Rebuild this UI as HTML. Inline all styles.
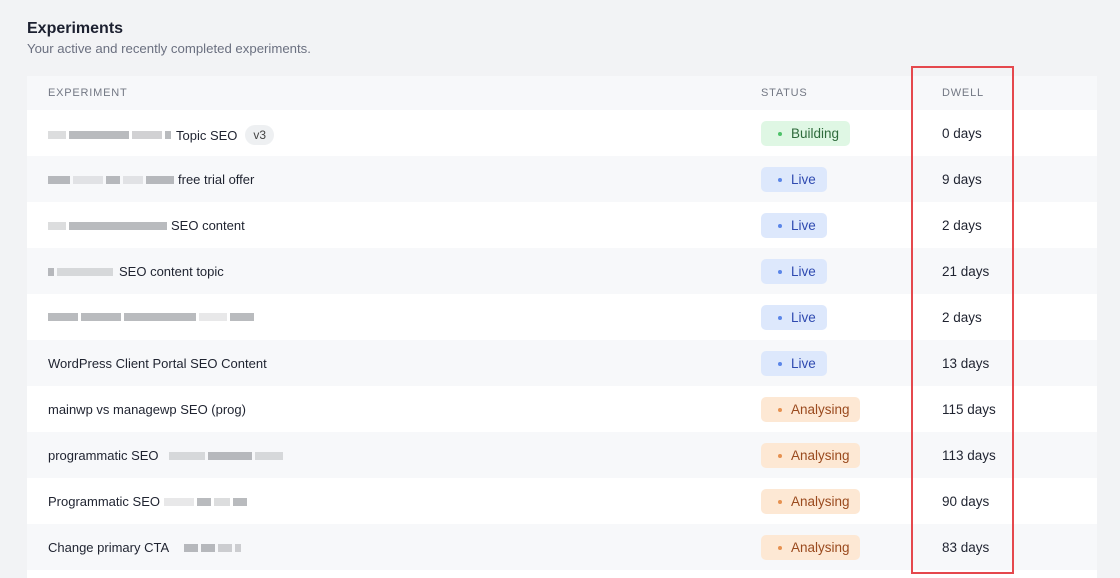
<!DOCTYPE html>
<html><head><style>
*{margin:0;padding:0;box-sizing:border-box}
html,body{width:1120px;height:578px;overflow:hidden}
body{background:#f2f3f5;font-family:"Liberation Sans",sans-serif;position:relative;color:#1f2330}
h1{position:absolute;left:27px;top:20px;font-size:16px;font-weight:bold;color:#1c2030}
.sub{position:absolute;left:27px;top:41px;font-size:13.2px;color:#6b7080}
.tbl{position:absolute;left:27px;top:76px;width:1070px}
.hd{height:34px;background:#f7f8fa;position:relative;font-size:11px;letter-spacing:.8px;color:#737884}
.hd span{position:absolute;top:11px}
.row{height:46px;position:relative;font-size:13px}
.name{position:absolute;left:21px;top:16px;white-space:nowrap;display:flex;align-items:center}
.dw{position:absolute;left:915px;top:16px;font-size:13.5px}
.b{position:absolute;left:734px;top:11px;height:25px;border-radius:5px;font-size:13.5px;padding:5px 0 0 30px}
.b:before{content:"";position:absolute;left:17px;top:11px;width:4px;height:4px;border-radius:50%}
.bu{background:#dff7e4;color:#2f6b3c;width:89px}
.bu:before{background:#4ec26a}
.li{background:#dde8fc;color:#2f4ab0;width:66px}
.li:before{background:#5b86e8}
.an{background:#fde8d4;color:#9a4a1e;width:99px}
.an:before{background:#e69150}
.px{display:inline-block;height:8px;background:#8b8d92;opacity:.6;margin-right:3px}
.v3{display:inline-block;background:#eef0f2;border-radius:10px;padding:3px 8px;font-size:12px;color:#444;margin-left:8px}
.red{position:absolute;left:911px;top:66px;width:103px;height:508px;border:2px solid #e5484d}
</style></head><body>
<h1>Experiments</h1>
<div class="sub">Your active and recently completed experiments.</div>
<div class="tbl">
<div class="hd"><span style="left:21px">EXPERIMENT</span><span style="left:734px">STATUS</span><span style="left:915px">DWELL</span></div>
<div>
<div class="row" style="background:#fff"><div class="name" style="top:15px"><span class="px" style="width:18px;opacity:.3"></span><span class="px" style="width:60px"></span><span class="px" style="width:30px;opacity:.4"></span><span class="px" style="width:6px;margin-right:5px"></span>Topic SEO <span class="v3">v3</span></div><div class="b bu">Building</div><div class="dw">0 days</div></div>
<div class="row" style="background:#f7f8fa"><div class="name"><span class="px" style="width:22px"></span><span class="px" style="width:30px;opacity:.2"></span><span class="px" style="width:14px"></span><span class="px" style="width:20px;opacity:.2"></span><span class="px" style="width:28px;margin-right:4px"></span>free trial offer</div><div class="b li">Live</div><div class="dw">9 days</div></div>
<div class="row" style="background:#fff"><div class="name"><span class="px" style="width:18px;opacity:.3"></span><span class="px" style="width:98px;margin-right:4px"></span>SEO content</div><div class="b li">Live</div><div class="dw">2 days</div></div>
<div class="row" style="background:#f7f8fa"><div class="name"><span class="px" style="width:6px"></span><span class="px" style="width:56px;opacity:.3;margin-right:6px"></span>SEO content topic</div><div class="b li">Live</div><div class="dw">21 days</div></div>
<div class="row" style="background:#fff"><div class="name" style="top:19px"><span class="px" style="width:30px"></span><span class="px" style="width:40px"></span><span class="px" style="width:72px"></span><span class="px" style="width:28px;opacity:.2"></span><span class="px" style="width:24px"></span></div><div class="b li">Live</div><div class="dw">2 days</div></div>
<div class="row" style="background:#f7f8fa"><div class="name">WordPress Client Portal SEO Content</div><div class="b li">Live</div><div class="dw">13 days</div></div>
<div class="row" style="background:#fff"><div class="name">mainwp vs managewp SEO (prog)</div><div class="b an">Analysing</div><div class="dw">115 days</div></div>
<div class="row" style="background:#f7f8fa"><div class="name">programmatic SEO&nbsp;&nbsp;&nbsp;<span class="px" style="width:36px;opacity:.3"></span><span class="px" style="width:44px"></span><span class="px" style="width:28px;opacity:.3"></span></div><div class="b an">Analysing</div><div class="dw">113 days</div></div>
<div class="row" style="background:#fff"><div class="name">Programmatic SEO&nbsp;<span class="px" style="width:30px;opacity:.2"></span><span class="px" style="width:14px"></span><span class="px" style="width:16px;opacity:.3"></span><span class="px" style="width:14px"></span></div><div class="b an">Analysing</div><div class="dw">90 days</div></div>
<div class="row" style="background:#f7f8fa"><div class="name">Change primary CTA&nbsp;&nbsp;&nbsp;&nbsp;<span class="px" style="width:14px"></span><span class="px" style="width:14px"></span><span class="px" style="width:14px;opacity:.4"></span><span class="px" style="width:6px;opacity:.4"></span></div><div class="b an">Analysing</div><div class="dw">83 days</div></div>
<div class="row" style="background:#fff;height:8px"></div>
</div></div>
<div class="red"></div>
</body></html>
